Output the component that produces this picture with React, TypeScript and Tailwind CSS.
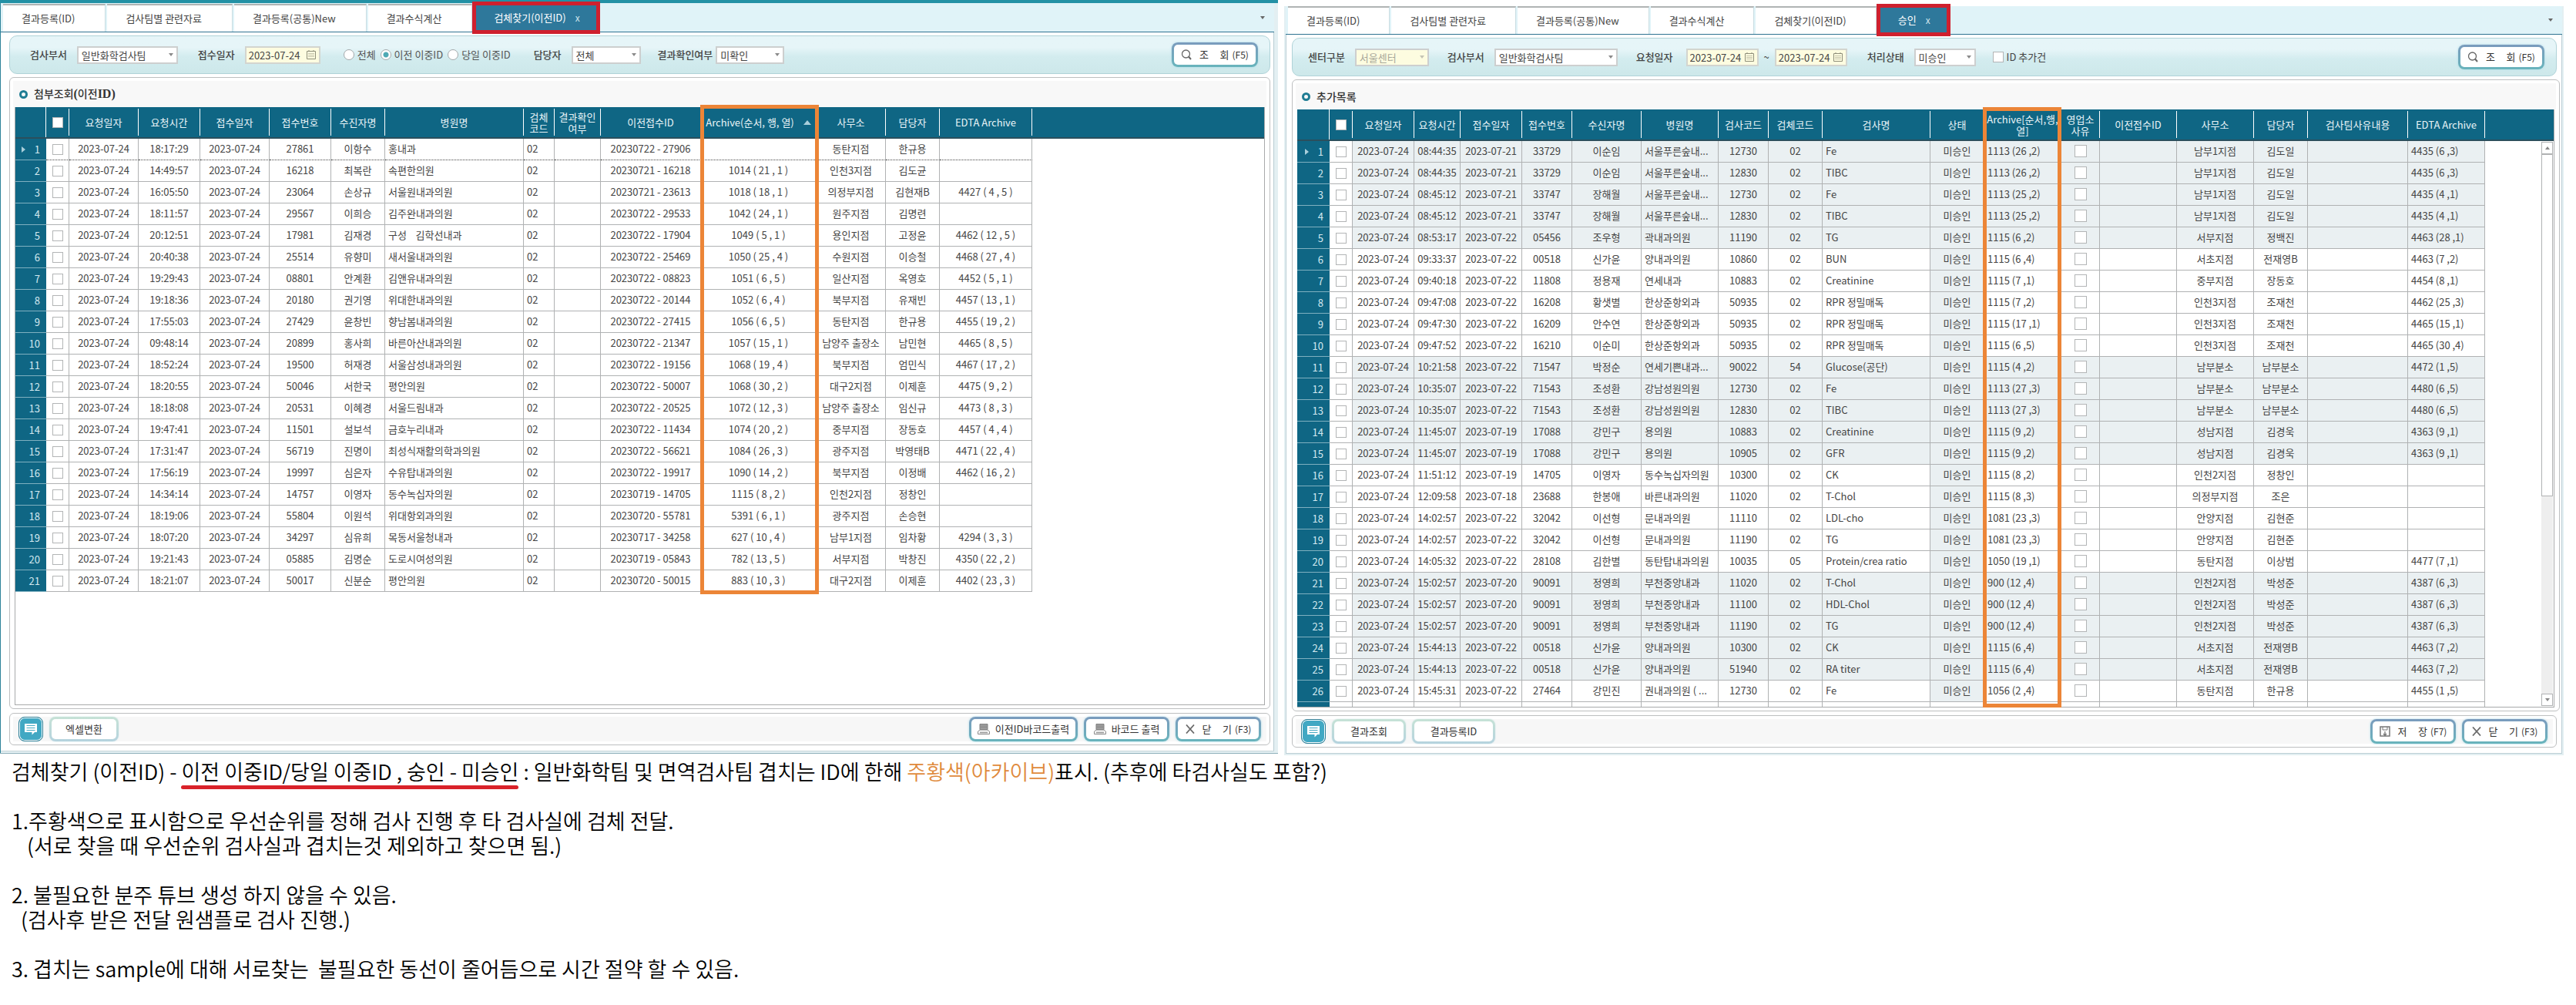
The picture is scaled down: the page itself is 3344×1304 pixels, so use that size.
import React, { useState } from 'react';

type Column = {
    label: string;
    width: string;
    align?: 'left' | 'center';
    lines?: string[];
    sort?: boolean;
    check?: boolean;
};

const CELL_LINE = "border-r border-b border-[#b0b2b3]";

const prevColumns: Column[] = [
    { label: "요청일자", width: "w-[90px]" },
    { label: "요청시간", width: "w-[80px]" },
    { label: "접수일자", width: "w-[90px]" },
    { label: "접수번호", width: "w-[80px]" },
    { label: "수진자명", width: "w-[70px]" },
    { label: "병원명", width: "w-[180px]", align: "left" },
    { label: "검체코드", width: "w-[40px]", align: "left", lines: ["검체", "코드"] },
    { label: "결과확인여부", width: "w-[60px]", lines: ["결과확인", "여부"] },
    { label: "이전접수ID", width: "w-[130px]" },
    { label: "Archive(순서, 행, 열)", width: "w-[150px]", sort: true },
    { label: "사무소", width: "w-[90px]" },
    { label: "담당자", width: "w-[70px]" },
    { label: "EDTA Archive", width: "w-[120px]" },
];

// [요청시간, 접수번호, 수진자명, 병원명, 이전접수ID, Archive, 사무소, 담당자, EDTA]
const prevData: string[][] = [
    ["18:17:29", "27861", "이항수", "홍내과", "20230722 - 27906", "", "동탄지점", "한규용", ""],
    ["14:49:57", "16218", "최복란", "속편한의원", "20230721 - 16218", "1014 ( 21 , 1 )", "인천3지점", "김도균", ""],
    ["16:05:50", "23064", "손상규", "서울원내과의원", "20230721 - 23613", "1018 ( 18 , 1 )", "의정부지점", "김현재B", "4427 ( 4 , 5 )"],
    ["18:11:57", "29567", "이희승", "김주완내과의원", "20230722 - 29533", "1042 ( 24 , 1 )", "원주지점", "김명련", ""],
    ["20:12:51", "17981", "김재경", "구성    김학선내과", "20230722 - 17904", "1049 ( 5 , 1 )", "용인지점", "고정윤", "4462 ( 12 , 5 )"],
    ["20:40:38", "25514", "유향미", "새서울내과의원", "20230722 - 25469", "1050 ( 25 , 4 )", "수원지점", "이승철", "4468 ( 27 , 4 )"],
    ["19:29:43", "08801", "안계환", "김앤유내과의원", "20230722 - 08823", "1051 ( 6 , 5 )", "일산지점", "옥영호", "4452 ( 5 , 1 )"],
    ["19:18:36", "20180", "권기영", "위대한내과의원", "20230722 - 20144", "1052 ( 6 , 4 )", "북부지점", "유재빈", "4457 ( 13 , 1 )"],
    ["17:55:03", "27429", "윤창빈", "향남봄내과의원", "20230722 - 27415", "1056 ( 6 , 5 )", "동탄지점", "한규용", "4455 ( 19 , 2 )"],
    ["09:48:14", "20899", "홍사희", "바른아산내과의원", "20230722 - 21347", "1057 ( 15 , 1 )", "남양주 출장소", "남민현", "4465 ( 8 , 5 )"],
    ["18:52:24", "19500", "허재경", "서울삼성내과의원", "20230722 - 19156", "1068 ( 19 , 4 )", "북부지점", "엄민식", "4467 ( 17 , 2 )"],
    ["18:20:55", "50046", "서한국", "평안의원", "20230722 - 50007", "1068 ( 30 , 2 )", "대구2지점", "이제훈", "4475 ( 9 , 2 )"],
    ["18:18:08", "20531", "이혜경", "서울드림내과", "20230722 - 20525", "1072 ( 12 , 3 )", "남양주 출장소", "임신규", "4473 ( 8 , 3 )"],
    ["19:47:41", "11501", "설보석", "금호누리내과", "20230722 - 11434", "1074 ( 20 , 2 )", "중부지점", "장동호", "4457 ( 4 , 4 )"],
    ["17:31:47", "56719", "진명이", "최성식재활의학과의원", "20230722 - 56621", "1084 ( 26 , 3 )", "광주지점", "박영태B", "4471 ( 22 , 4 )"],
    ["17:56:19", "19997", "심은자", "수유탑내과의원", "20230722 - 19917", "1090 ( 14 , 2 )", "북부지점", "이정배", "4462 ( 16 , 2 )"],
    ["14:34:14", "14757", "이영자", "동수녹십자의원", "20230719 - 14705", "1115 ( 8 , 2 )", "인천2지점", "정창인", ""],
    ["18:19:06", "55804", "이원석", "위대항외과의원", "20230720 - 55781", "5391 ( 6 , 1 )", "광주지점", "손승현", ""],
    ["18:07:20", "34297", "심유희", "목동서울청내과", "20230717 - 34258", "627 ( 10 , 4 )", "남부1지점", "임차황", "4294 ( 3 , 3 )"],
    ["19:21:43", "05885", "김명순", "도로시여성의원", "20230719 - 05843", "782 ( 13 , 5 )", "서부지점", "박창진", "4350 ( 22 , 2 )"],
    ["18:21:07", "50017", "신분순", "평안의원", "20230720 - 50015", "883 ( 10 , 3 )", "대구2지점", "이제훈", "4402 ( 23 , 3 )"],
];

const prevRows = prevData.map(([time, no, name, hospital, prevId, archive, office, manager, edta]) => [
    "2023-07-24", time, "2023-07-24", no, name, hospital, "02", "", prevId, archive, office, manager, edta,
]);

const approvalColumns: Column[] = [
    { label: "요청일자", width: "w-[80px]" },
    { label: "요청시간", width: "w-[60px]" },
    { label: "접수일자", width: "w-[80px]" },
    { label: "접수번호", width: "w-[65px]" },
    { label: "수신자명", width: "w-[90px]" },
    { label: "병원명", width: "w-[100px]", align: "left" },
    { label: "검사코드", width: "w-[65px]" },
    { label: "검체코드", width: "w-[70px]" },
    { label: "검사명", width: "w-[140px]", align: "left" },
    { label: "상태", width: "w-[70px]" },
    { label: "Archive", width: "w-[100px]", align: "left", lines: ["Archive[순서,행,", "열]"] },
    { label: "영업소사유", width: "w-[50px]", lines: ["영업소", "사유"], check: true },
    { label: "이전접수ID", width: "w-[100px]" },
    { label: "사무소", width: "w-[100px]" },
    { label: "담당자", width: "w-[70px]" },
    { label: "검사팀사유내용", width: "w-[130px]" },
    { label: "EDTA Archive", width: "w-[100px]", align: "left" },
];

// [요청시간, 접수일, 접수번호, 수신자명, 병원명, 검사코드, 검체코드, 검사명, Archive, 사무소, 담당자, EDTA]
const approvalData: string[][] = [
    ["08:44:35", "21", "33729", "이순임", "서울푸른숲내...", "12730", "02", "Fe", "1113 (26 ,2)", "남부1지점", "김도일", "4435 (6 ,3)"],
    ["08:44:35", "21", "33729", "이순임", "서울푸른숲내...", "12830", "02", "TIBC", "1113 (26 ,2)", "남부1지점", "김도일", "4435 (6 ,3)"],
    ["08:45:12", "21", "33747", "장해월", "서울푸른숲내...", "12730", "02", "Fe", "1113 (25 ,2)", "남부1지점", "김도일", "4435 (4 ,1)"],
    ["08:45:12", "21", "33747", "장해월", "서울푸른숲내...", "12830", "02", "TIBC", "1113 (25 ,2)", "남부1지점", "김도일", "4435 (4 ,1)"],
    ["08:53:17", "22", "05456", "조우형", "곽내과의원", "11190", "02", "TG", "1115 (6 ,2)", "서부지점", "정백진", "4463 (28 ,1)"],
    ["09:33:37", "22", "00518", "신가윤", "양내과의원", "10860", "02", "BUN", "1115 (6 ,4)", "서초지점", "전재영B", "4463 (7 ,2)"],
    ["09:40:18", "22", "11808", "정용재", "연세내과", "10883", "02", "Creatinine", "1115 (7 ,1)", "중부지점", "장동호", "4454 (8 ,1)"],
    ["09:47:08", "22", "16208", "황샛별", "한상준항외과", "50935", "02", "RPR 정밀매독", "1115 (7 ,2)", "인천3지점", "조재천", "4462 (25 ,3)"],
    ["09:47:30", "22", "16209", "안수연", "한상준항외과", "50935", "02", "RPR 정밀매독", "1115 (17 ,1)", "인천3지점", "조재천", "4465 (15 ,1)"],
    ["09:47:52", "22", "16210", "이순미", "한상준항외과", "50935", "02", "RPR 정밀매독", "1115 (6 ,5)", "인천3지점", "조재천", "4465 (30 ,4)"],
    ["10:21:58", "22", "71547", "박정순", "연세기쁜내과...", "90022", "54", "Glucose(공단)", "1115 (4 ,2)", "남부분소", "남부분소", "4472 (1 ,5)"],
    ["10:35:07", "22", "71543", "조성환", "강남성원의원", "12730", "02", "Fe", "1113 (27 ,3)", "남부분소", "남부분소", "4480 (6 ,5)"],
    ["10:35:07", "22", "71543", "조성환", "강남성원의원", "12830", "02", "TIBC", "1113 (27 ,3)", "남부분소", "남부분소", "4480 (6 ,5)"],
    ["11:45:07", "19", "17088", "강민구", "용의원", "10883", "02", "Creatinine", "1115 (9 ,2)", "성남지점", "김경욱", "4363 (9 ,1)"],
    ["11:45:07", "19", "17088", "강민구", "용의원", "10905", "02", "GFR", "1115 (9 ,2)", "성남지점", "김경욱", "4363 (9 ,1)"],
    ["11:51:12", "19", "14705", "이영자", "동수녹십자의원", "10300", "02", "CK", "1115 (8 ,2)", "인천2지점", "정창인", ""],
    ["12:09:58", "18", "23688", "한봉애", "바른내과의원", "11020", "02", "T-Chol", "1115 (8 ,3)", "의정부지점", "조은", ""],
    ["14:02:57", "22", "32042", "이선형", "문내과의원", "11110", "02", "LDL-cho", "1081 (23 ,3)", "안양지점", "김현준", ""],
    ["14:02:57", "22", "32042", "이선형", "문내과의원", "11190", "02", "TG", "1081 (23 ,3)", "안양지점", "김현준", ""],
    ["14:05:32", "22", "28108", "김한별", "동탄탑내과의원", "10035", "05", "Protein/crea ratio", "1050 (19 ,1)", "동탄지점", "이상범", "4477 (7 ,1)"],
    ["15:02:57", "20", "90091", "정영희", "부천중앙내과", "11020", "02", "T-Chol", "900 (12 ,4)", "인천2지점", "박성준", "4387 (6 ,3)"],
    ["15:02:57", "20", "90091", "정영희", "부천중앙내과", "11100", "02", "HDL-Chol", "900 (12 ,4)", "인천2지점", "박성준", "4387 (6 ,3)"],
    ["15:02:57", "20", "90091", "정영희", "부천중앙내과", "11190", "02", "TG", "900 (12 ,4)", "인천2지점", "박성준", "4387 (6 ,3)"],
    ["15:44:13", "22", "00518", "신가윤", "양내과의원", "10300", "02", "CK", "1115 (6 ,4)", "서초지점", "전재영B", "4463 (7 ,2)"],
    ["15:44:13", "22", "00518", "신가윤", "양내과의원", "51940", "02", "RA titer", "1115 (6 ,4)", "서초지점", "전재영B", "4463 (7 ,2)"],
    ["15:45:31", "22", "27464", "강민진", "권내과의원 ( ...", "12730", "02", "Fe", "1056 (2 ,4)", "동탄지점", "한규용", "4455 (1 ,5)"],
];

const approvalRows = approvalData.map(([time, day, no, name, hospital, testCode, code, test, archive, office, manager, edta]) => [
    "2023-07-24", time, `2023-07-${day}`, no, name, hospital, testCode, code, test, "미승인", archive, "", "", office, manager, "", edta,
]);

/* icons */
const CaretIcon = ({ className = "fill-[#8a8a8a]" }: { className?: string }) => (
    <svg viewBox="0 0 6 4" className={`w-[6px] h-[4px] ${className}`}><path d="M0 0h6L3 4z" /></svg>
);

const CalendarIcon = () => (
    <svg viewBox="0 0 12 12" className="w-3 h-3 fill-none stroke-[#8f8f7a]">
        <path d="M.5 1.500h11v10H.5z" />
        <path d="M2 1.500h8M2.500 4.500h7M2.500 6.500h7M2.500 8.500h7" strokeDasharray="1 1" />
        <path d="M3 0v2M9 0v2" />
    </svg>
);

const SearchIcon = () => (
    <svg viewBox="0 0 14 14" className="w-[14px] h-[14px] fill-none stroke-[#666]">
        <circle cx="6.500" cy="6" r="5" strokeWidth="1.300" />
        <path d="M10 9.500l3 3.500" strokeWidth="2" />
    </svg>
);

const PrinterIcon = () => (
    <svg viewBox="0 0 16 14" className="w-4 h-[14px]">
        <path d="M3 .5h10v7H3z" fill="#a3a3a3" stroke="#7d7d7d" />
        <path d="M3.500 3h9M3.500 5h9" stroke="#858585" />
        <path d="M3 8h10l2.500 2v3.500H.5V10z" fill="#f4f4f4" stroke="#8c8c8c" />
        <path d="M3 11.500h10" stroke="#999" strokeWidth="1.500" />
    </svg>
);

const CloseIcon = () => (
    <svg viewBox="0 0 12 12" className="w-3 h-3 stroke-[#6b6b6b]"><path d="M1 .5l10 11M11 .5L1 11.500" strokeWidth="1.800" /></svg>
);

const SaveIcon = () => (
    <svg viewBox="0 0 14 14" className="w-[14px] h-[14px] fill-none stroke-[#777]">
        <path d="M1 1h12v12H1z" strokeWidth="1.500" />
        <path d="M4 1v4h6V1" />
        <path d="M7 7v5M5 10l2 2.500 2-2.500" strokeWidth="1.300" />
    </svg>
);

const ChatIcon = () => (
    <svg viewBox="0 0 18 16" className="w-[18px] h-4">
        <path d="M1 1h16v11h-3l-3.500 3.500L10.500 12H1z" fill="#fff" />
        <path d="M3.500 3.500h11M3.500 6.500h11M3.500 9.500h11" stroke="#46a9c2" strokeWidth="1.200" />
    </svg>
);

/* form controls */
const Select = ({ id, value, width, disabled }: { id: string; value: string; width: string; disabled?: boolean }) => (
    <div className={`relative flex items-center ${width}`}>
        <select
            id={id}
            disabled={disabled}
            className={`appearance-none w-full h-[23px] border-2 border-[#cdcfcf] pl-1 text-[13px] leading-[19px] ${disabled ? "bg-[#fdfce0] text-[#a8a89a]" : "bg-white text-[#444]"}`}
        >
            <option>{value}</option>
        </select>
        <span className="absolute right-[6px] pointer-events-none"><CaretIcon className={disabled ? "fill-[#c4c4b4]" : "fill-[#8a8a8a]"} /></span>
    </div>
);

const DateInput = ({ id, width, label }: { id: string; width: string; label?: string }) => (
    <div className={`flex items-center h-[23px] border-2 border-[#d3d5cf] bg-[#fdfce0] pl-[3px] pr-1 ${width}`}>
        <input id={id} aria-label={label} type="text" defaultValue="2023-07-24" className="min-w-0 flex-1 bg-transparent text-[13px] leading-[19px] text-[#444] outline-none" />
        <CalendarIcon />
    </div>
);

const Label = ({ htmlFor, children }: { htmlFor: string; children: React.ReactNode }) => (
    <label htmlFor={htmlFor} className="text-[13px] font-medium text-[#444] whitespace-nowrap">{children}</label>
);

const CheckBox = ({ label, id, className = "w-[14px] h-[14px]" }: { label?: string; id?: string; className?: string }) => (
    <input type="checkbox" id={id} aria-label={label} className={`appearance-none block shrink-0 bg-white border border-[#b3b5b6] checked:bg-[#4aa5b5] ${className}`} />
);

const RadioButton = ({ id, label, checked }: { id: string; label: string; checked?: boolean }) => (
    <div className="flex items-center gap-1">
        <input
            type="radio"
            id={id}
            name="duplicate-id"
            defaultChecked={checked}
            className="appearance-none w-[14px] h-[14px] rounded-full border border-[#a3a8aa] bg-white checked:bg-[radial-gradient(circle,#4fa9b4_3px,#fff_4px)]"
        />
        <label htmlFor={id} className="text-[13px] text-[#555] whitespace-nowrap">{label}</label>
    </div>
);

const ActionButton = ({ icon, text, hotkey, width }: { icon: React.ReactNode; text: string; hotkey?: string; width: string }) => (
    <button className={`h-8 rounded-lg p-[3px] bg-linear-to-b from-[#7a9bbd] to-[#68b4bc] shadow-[0_0_3px_#a9dbe8] cursor-pointer ${width}`}>
        <span className={`flex items-center justify-center h-full rounded-[5px] bg-white text-[13px] text-[#333] whitespace-pre ${hotkey ? "gap-[10px]" : "gap-[7px]"}`}>
            {icon}
            <span className="flex items-center gap-1">{text}{hotkey && <span className="text-xs">{hotkey}</span>}</span>
        </span>
    </button>
);

const PlainButton = ({ text, width }: { text: string; width: string }) => (
    <button className={`h-8 rounded-lg p-[3px] bg-linear-to-b from-[#c6e2d6] to-[#b5d3de] shadow-[0_0_2px_#cfe6ea] cursor-pointer ${width}`}>
        <span className="flex items-center justify-center h-full rounded-[5px] bg-white text-[13px] text-[#333]">{text}</span>
    </button>
);

const ChatButton = () => (
    <button aria-label="메모" className="w-8 h-8 rounded-lg border border-[#2b7d95] bg-[#41a8c3] shadow-[inset_0_0_0_1px_#fff] flex items-center justify-center cursor-pointer">
        <ChatIcon />
    </button>
);

/* tabs */
const TabBar = ({ tabs, active, height, tabPadding }: { tabs: string[]; active: string; height: string; tabPadding: string }) => {
    const [current, setCurrent] = useState(active);
    return (
        <div className={`flex items-end justify-between bg-[#e0f3f8] border-b border-[#2f7391] pl-[3px] pr-3 ${height}`}>
            <div role="tablist" className="flex items-end gap-[2px]">
                {tabs.map((tab) => (
                    tab === current ? (
                        <button key={tab} role="tab" aria-selected="true" className="relative h-9 bg-[#2e789b] text-white text-[13px] px-[26px] flex items-center gap-3 whitespace-nowrap">
                            {tab}
                            <span className="text-xs text-[#cfe3ec]">x</span>
                            {/* red marker around the open tab */}
                            <span className="absolute -top-[3px] -bottom-[3px] -left-[2px] right-0 border-[5px] border-[#cf202e] pointer-events-none" />
                        </button>
                    ) : (
                        <button key={tab} role="tab" aria-selected="false" onClick={() => setCurrent(tab)} className={`h-9 bg-white border-t-2 border-t-[#b0b4b4] border-r border-r-[#c9dde2] text-[#444] text-[13px] pl-6 whitespace-nowrap cursor-pointer ${tabPadding}`}>
                            {tab}
                        </button>
                    )
                ))}
            </div>
            <span className="self-center"><CaretIcon className="fill-[#666]" /></span>
        </div>
    );
};

const HeadLabel = ({ col }: { col: Column }) => (
    <div className="h-[35px] flex items-center justify-center gap-3 border-r border-white leading-[15px] whitespace-nowrap">
        <span>{col.lines ? col.lines.map((line) => <span key={line} className="block">{line}</span>) : col.label}</span>
        {col.sort && <svg viewBox="0 0 10 6" className="w-[10px] h-[6px] fill-[#a9cfdb]"><path d="M5 0l5 6H0z" /></svg>}
    </div>
);

type GridProps = {
    name: string;
    columns: Column[];
    rows: string[][];
    firstWidth: string;
    shaded?: (row: number, col: number) => boolean;
    dotted?: boolean;
    partial?: boolean;
};

const DOTTED_LINE = "[border-bottom-style:dotted] border-b-[#444]";

const DataGrid = ({ name, columns, rows, firstWidth, shaded, dotted, partial }: GridProps) => (
    <table className="table-fixed w-full border-separate border-spacing-0 text-[13px] text-[#444]">
        <colgroup>
            <col className={firstWidth} />
            <col className="w-[30px]" />
            {columns.map((col) => <col key={col.label} className={col.width} />)}
            <col />
        </colgroup>
        <thead>
            <tr className="h-[41px] bg-[#0f6684] text-[#e9f4f7]">
                <th className="p-0 border-b-2 border-[#2b4f5d] font-normal"><div className="h-[39px] border-r border-white" /></th>
                <th className="p-0 border-b-2 border-[#2b4f5d] font-normal">
                    <div className="h-[35px] border-r border-white flex items-center justify-center"><CheckBox label={`${name} 전체선택`} /></div>
                </th>
                {columns.map((col) => (
                    <th key={col.label} className="p-0 border-b-2 border-[#2b4f5d] font-normal"><HeadLabel col={col} /></th>
                ))}
                <th className="p-0 border-b-2 border-[#2b4f5d]" />
            </tr>
        </thead>
        <tbody>
            {rows.map((row, r) => (
                <tr key={r} className="h-7">
                    <th className="p-0 pr-2 bg-[#0f6684] border-b border-[#7fb0c0] text-[#d3e9f0] font-normal text-right">
                        <div className="flex items-center justify-end gap-3">
                            {r === 0 && <svg viewBox="0 0 5 8" className="w-[5px] h-2 fill-[#a9cfdb]"><path d="M0 0l5 4-5 4z" /></svg>}
                            {r + 1}
                        </div>
                    </th>
                    <td className={`p-0 ${CELL_LINE} ${dotted && r === 0 ? DOTTED_LINE : ""}`}>
                        <div className="flex justify-center"><CheckBox label={`${name} ${r + 1}행 선택`} /></div>
                    </td>
                    {row.map((value, c) => (
                        <td
                            key={c}
                            className={`p-0 pb-[2px] leading-5 whitespace-pre overflow-hidden ${CELL_LINE} ${columns[c].align === 'left' ? "text-left pl-1" : "text-center"} ${shaded && shaded(r, c) ? "bg-[#eaf0f2]" : ""} ${dotted && r === 0 ? DOTTED_LINE : ""}`}
                        >
                            {columns[c].check ? <div className="flex justify-center"><CheckBox label={`${columns[c].label} ${r + 1}행`} className="w-4 h-4" /></div> : value}
                        </td>
                    ))}
                    <td />
                </tr>
            ))}
            {partial && (
                <tr className="h-[6px]">
                    <th className="p-0 bg-[#0f6684]" />
                    <td className="p-0 border-r border-[#b0b2b3]" />
                    {columns.map((col) => <td key={col.label} className="p-0 border-r border-[#b0b2b3]" />)}
                    <td />
                </tr>
            )}
        </tbody>
    </table>
);

const GridTitle = ({ children }: { children: React.ReactNode }) => (
    <h2 className="flex items-center gap-2 h-[34px] pl-2 bg-[#f8f8f8] text-sm font-medium text-[#333]">
        <span className="w-[11px] h-[11px] rounded-full border-[3px] border-[#1f7c93]" />
        <span>{children}</span>
    </h2>
);

const FILTER = "flex items-center h-[50px] rounded-[10px] border border-[#b0d3d8] bg-linear-to-b from-[#e6f5f8] from-30% via-[#d3ecef] via-55% to-[#cde8ea]";
const GROUP = "flex items-center gap-[13px]";
const PANEL = "rounded-md border border-[#bdbfc0] bg-white";

const PreviousIdWindow = () => (
    <section className="flex-[1661_1_0%] min-w-0 border-t-4 border-[#2391a5]">
        <div className="border-l border-l-[#2d8299] border-r-[5px] border-r-[#e3eff2]">
            <TabBar
                height="h-[38px]"
                tabPadding="pr-[39px]"
                tabs={["결과등록(ID)", "검사팀별 관련자료", "결과등록(공통)New", "결과수식계산", "검체찾기(이전ID)"]}
                active="검체찾기(이전ID)"
            />
            <div className="pl-[11px] pr-1 pt-1 pb-[7px] border-r border-[#b9cdd3]">
                <form className={`${FILTER} pl-[26px] pr-[15px] justify-between`}>
                    <div className="flex items-center">
                        <div className={GROUP}>
                            <Label htmlFor="prev-dept">검사부서</Label>
                            <Select id="prev-dept" value="일반화학검사팀" width="w-[131px]" />
                        </div>
                        <div className={`${GROUP} ml-[26px]`}>
                            <Label htmlFor="prev-date">접수일자</Label>
                            <DateInput id="prev-date" width="w-[98px]" />
                        </div>
                        <div className="flex items-center gap-[6px] ml-[30px]">
                            <RadioButton id="dup-all" label="전체" />
                            <RadioButton id="dup-prev" label="이전 이중ID" checked />
                            <RadioButton id="dup-today" label="당일 이중ID" />
                        </div>
                        <div className={`${GROUP} ml-[30px]`}>
                            <Label htmlFor="prev-manager">담당자</Label>
                            <Select id="prev-manager" value="전체" width="w-[90px]" />
                        </div>
                        <div className="flex items-center gap-1 ml-[22px]">
                            <Label htmlFor="prev-confirm">결과확인여부</Label>
                            <Select id="prev-confirm" value="미확인" width="w-[89px]" />
                        </div>
                    </div>
                    <ActionButton icon={<SearchIcon />} text={"조     회"} hotkey="(F5)" width="w-[112px]" />
                </form>
                <div className={`${PANEL} mt-1 p-1`}>
                    <GridTitle>첨부조회<span className="font-['Liberation_Serif'] font-bold text-base">(</span>이전<span className="font-['Liberation_Serif'] font-bold text-base">ID)</span></GridTitle>
                    <div className="relative mx-[2px] h-[776px] border-r border-b border-l border-[#a8aaab]">
                        <div className="relative">
                            <DataGrid name="첨부조회" columns={prevColumns} rows={prevRows} firstWidth="w-[40px]" dotted />
                            <div className="absolute left-[889px] w-[154px] -top-[3px] -bottom-[3px] border-[5px] border-[#ec8537] pointer-events-none" />
                        </div>
                    </div>
                </div>
                <div className={`${PANEL} mt-[5px] p-1`}>
                    <div className="flex items-center justify-between bg-[#f7f7f7] px-[7px]">
                        <div className="flex items-center gap-2">
                            <ChatButton />
                            <PlainButton text="엑셀변환" width="w-[90px]" />
                        </div>
                        <div className="flex items-center gap-2">
                            <ActionButton icon={<PrinterIcon />} text="이전ID바코드출력" width="w-[141px]" />
                            <ActionButton icon={<PrinterIcon />} text="바코드 출력" width="w-[111px]" />
                            <ActionButton icon={<CloseIcon />} text={"닫     기"} hotkey="(F3)" width="w-[111px]" />
                        </div>
                    </div>
                </div>
            </div>
            <div className="h-[3px] bg-[#e3eff2] border-t border-[#c5d5d9]" />
        </div>
        <div className="h-px bg-[#8fb0bb]" />
    </section>
);

const ApprovalWindow = () => (
    <section className="flex-[1659_1_0%] min-w-0 mt-2 border-x-2 border-[#e3eff2]">
        <TabBar
            height="h-[37px]"
            tabPadding="pr-[38px]"
            tabs={["결과등록(ID)", "검사팀별 관련자료", "결과등록(공통)New", "결과수식계산", "검체찾기(이전ID)", "승인"]}
            active="승인"
        />
        <div className="border-l border-r border-[#bccfd6] pl-[7px] pr-[2px] pt-1 pb-[7px]">
            <form className={`${FILTER} pl-[20px] pr-[15px] mr-1 justify-between`}>
                <div className="flex items-center">
                    <div className={GROUP}>
                        <Label htmlFor="ap-center">센터구분</Label>
                        <Select id="ap-center" value="서울센터" width="w-24" disabled />
                    </div>
                    <div className={`${GROUP} ml-6`}>
                        <Label htmlFor="ap-dept">검사부서</Label>
                        <Select id="ap-dept" value="일반화학검사팀" width="w-40" />
                    </div>
                    <div className="flex items-center gap-[17px] ml-6">
                        <Label htmlFor="ap-from">요청일자</Label>
                        <div className="flex items-center gap-[7px] text-[13px] text-[#444]">
                            <DateInput id="ap-from" width="w-[94px]" />
                            <span>~</span>
                            <DateInput id="ap-to" label="요청일자 종료" width="w-[94px]" />
                        </div>
                    </div>
                    <div className={`${GROUP} ml-[26px]`}>
                        <Label htmlFor="ap-state">처리상태</Label>
                        <Select id="ap-state" value="미승인" width="w-20" />
                    </div>
                    <div className="flex items-center gap-1 ml-[22px] text-[13px] text-[#444]">
                        <CheckBox id="ap-added" />
                        <label htmlFor="ap-added">ID 추가건</label>
                    </div>
                </div>
                <ActionButton icon={<SearchIcon />} text={"조     회"} hotkey="(F5)" width="w-[112px]" />
            </form>
            <div className={`${PANEL} mt-1 p-1`}>
                <GridTitle>추가목록</GridTitle>
                <div className="relative mx-[2px]">
                    <div className="h-[776px] overflow-hidden border-r border-b border-[#a8aaab]">
                        <DataGrid
                            name="추가목록"
                            columns={approvalColumns}
                            rows={approvalRows}
                            firstWidth="w-[42px]"
                            shaded={(r, c) => c === 9 || (Math.floor(r / 5) % 2 === 0 && r < 25)}
                            partial
                        />
                    </div>
                    {/* scroll bar beside the rows */}
                    <div className="absolute right-[2px] top-[42px] bottom-[2px] w-[15px] bg-[#eeeeee] flex flex-col">
                        <div className="h-4 border border-[#b0b2b3] bg-white flex items-center justify-center"><CaretIcon className="fill-[#888] rotate-180" /></div>
                        <div className="flex-[443] border border-[#b0b2b3] bg-white" />
                        <div className="flex-[257]" />
                        <div className="h-4 border border-[#b0b2b3] bg-white flex items-center justify-center"><CaretIcon className="fill-[#888]" /></div>
                    </div>
                    <div className="absolute left-[890px] w-[102px] -top-[3px] bottom-0 border-[5px] border-[#ec8537] pointer-events-none" />
                </div>
            </div>
            <div className={`${PANEL} mt-[5px] mr-1 p-1`}>
                <div className="flex items-center justify-between bg-[#f7f7f7] px-[7px]">
                    <div className="flex items-center gap-2">
                        <ChatButton />
                        <PlainButton text="결과조회" width="w-24" />
                        <PlainButton text="결과등록ID" width="w-[108px]" />
                    </div>
                    <div className="flex items-center gap-2">
                        <ActionButton icon={<SaveIcon />} text={"저     장"} hotkey="(F7)" width="w-[111px]" />
                        <ActionButton icon={<CloseIcon />} text={"닫     기"} hotkey="(F3)" width="w-[111px]" />
                    </div>
                </div>
            </div>
        </div>
        <div className="h-[3px] bg-[#e3eff2] border-t border-[#bccfd6]" />
    </section>
);

const Notes = () => (
    <article className="pl-[15px] pt-[5px] text-[27px] leading-8 text-black font-[350] whitespace-pre">
        <p>
            검체찾기 (이전ID) - <span className="relative">이전 이중ID/당일 이중ID , 숭인 - 미승인<span className="absolute left-0 right-0 -bottom-1 h-[5px] rounded-full bg-[#d9222a]" /></span> : 일반화학팀 및 면역검사팀 겹치는 ID에 한해 <span className="text-[#e08a3c]">주황색(아카이브)</span>표시. (추후에 타검사실도 포함?)
        </p>
        <p className="mt-8">1.주황색으로 표시함으로 우선순위를 정해 검사 진행 후 타 검사실에 검체 전달.</p>
        <p className="pl-5">(서로 찾을 때 우선순위 검사실과 겹치는것 제외하고 찾으면 됨.)</p>
        <p className="mt-8">2. 불필요한 분주 튜브 생성 하지 않을 수 있음.</p>
        <p className="pl-3">(검사후 받은 전달 원샘플로 검사 진행.)</p>
        <p className="mt-8">3. 겹치는 sample에 대해 서로찾는  불필요한 동선이 줄어듬으로 시간 절약 할 수 있음.</p>
    </article>
);

export default function App() {
    return (
        <main className="bg-white pb-6 font-['Noto_Sans_CJK_KR',sans-serif]">
            <div className="flex items-start gap-2 pr-4">
                <PreviousIdWindow />
                <ApprovalWindow />
            </div>
            <Notes />
        </main>
    );
}
